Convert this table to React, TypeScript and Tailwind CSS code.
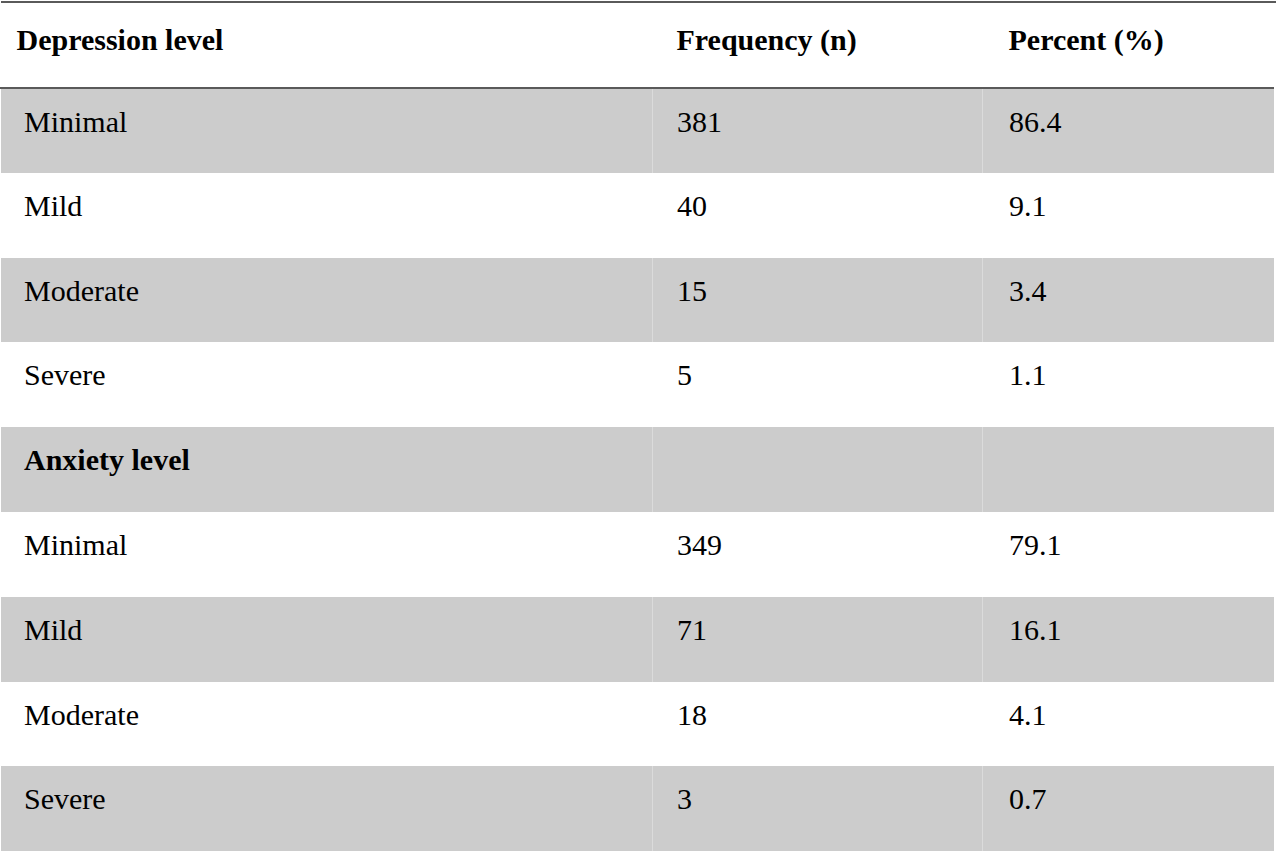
import React from "react";

type Row = { label: string; n: string; pct: string; heading?: boolean };

const rows: Row[] = [
  { label: "Minimal", n: "381", pct: "86.4" },
  { label: "Mild", n: "40", pct: "9.1" },
  { label: "Moderate", n: "15", pct: "3.4" },
  { label: "Severe", n: "5", pct: "1.1" },
  { label: "Anxiety level", n: "", pct: "", heading: true },
  { label: "Minimal", n: "349", pct: "79.1" },
  { label: "Mild", n: "71", pct: "16.1" },
  { label: "Moderate", n: "18", pct: "4.1" },
  { label: "Severe", n: "3", pct: "0.7" },
];

export default function App() {
  return (
    <div className="w-[1280px] h-[853px] bg-white pt-px pr-[2px] font-['Liberation_Serif',serif] text-[30px] leading-[30px] text-black">
      <table className="w-full border-collapse table-fixed">
        <colgroup>
          <col className="w-[652px]" />
          <col className="w-[330px]" />
          <col />
        </colgroup>
        <thead>
          {/* header row with dark rules top and bottom */}
          <tr className="h-[86px] border-t-2 border-b-2 border-[#5a5a5a]">
            <th className="text-left font-bold pl-4 pt-[22px] align-top">Depression level</th>
            <th className="text-left font-bold pl-6 pt-[22px] align-top">Frequency (n)</th>
            <th className="text-left font-bold pl-[26px] pt-[22px] align-top">Percent (%)</th>
          </tr>
        </thead>
        <tbody>
          {rows.map((r, i) => (
            <tr key={i} className={`h-[84.8px] ${i % 2 === 0 ? "bg-[#cccccc]" : "bg-white"}`}>
              <td className={`pl-[23px] pt-[18px] align-top border-l border-white ${r.heading ? "font-bold" : ""}`}>{r.label}</td>
              <td className="pl-6 pt-[18px] align-top border-l border-white/30">{r.n}</td>
              <td className="pl-[26px] pt-[18px] align-top border-l border-white/30 border-r-4 border-r-white">{r.pct}</td>
            </tr>
          ))}
        </tbody>
      </table>
    </div>
  );
}
